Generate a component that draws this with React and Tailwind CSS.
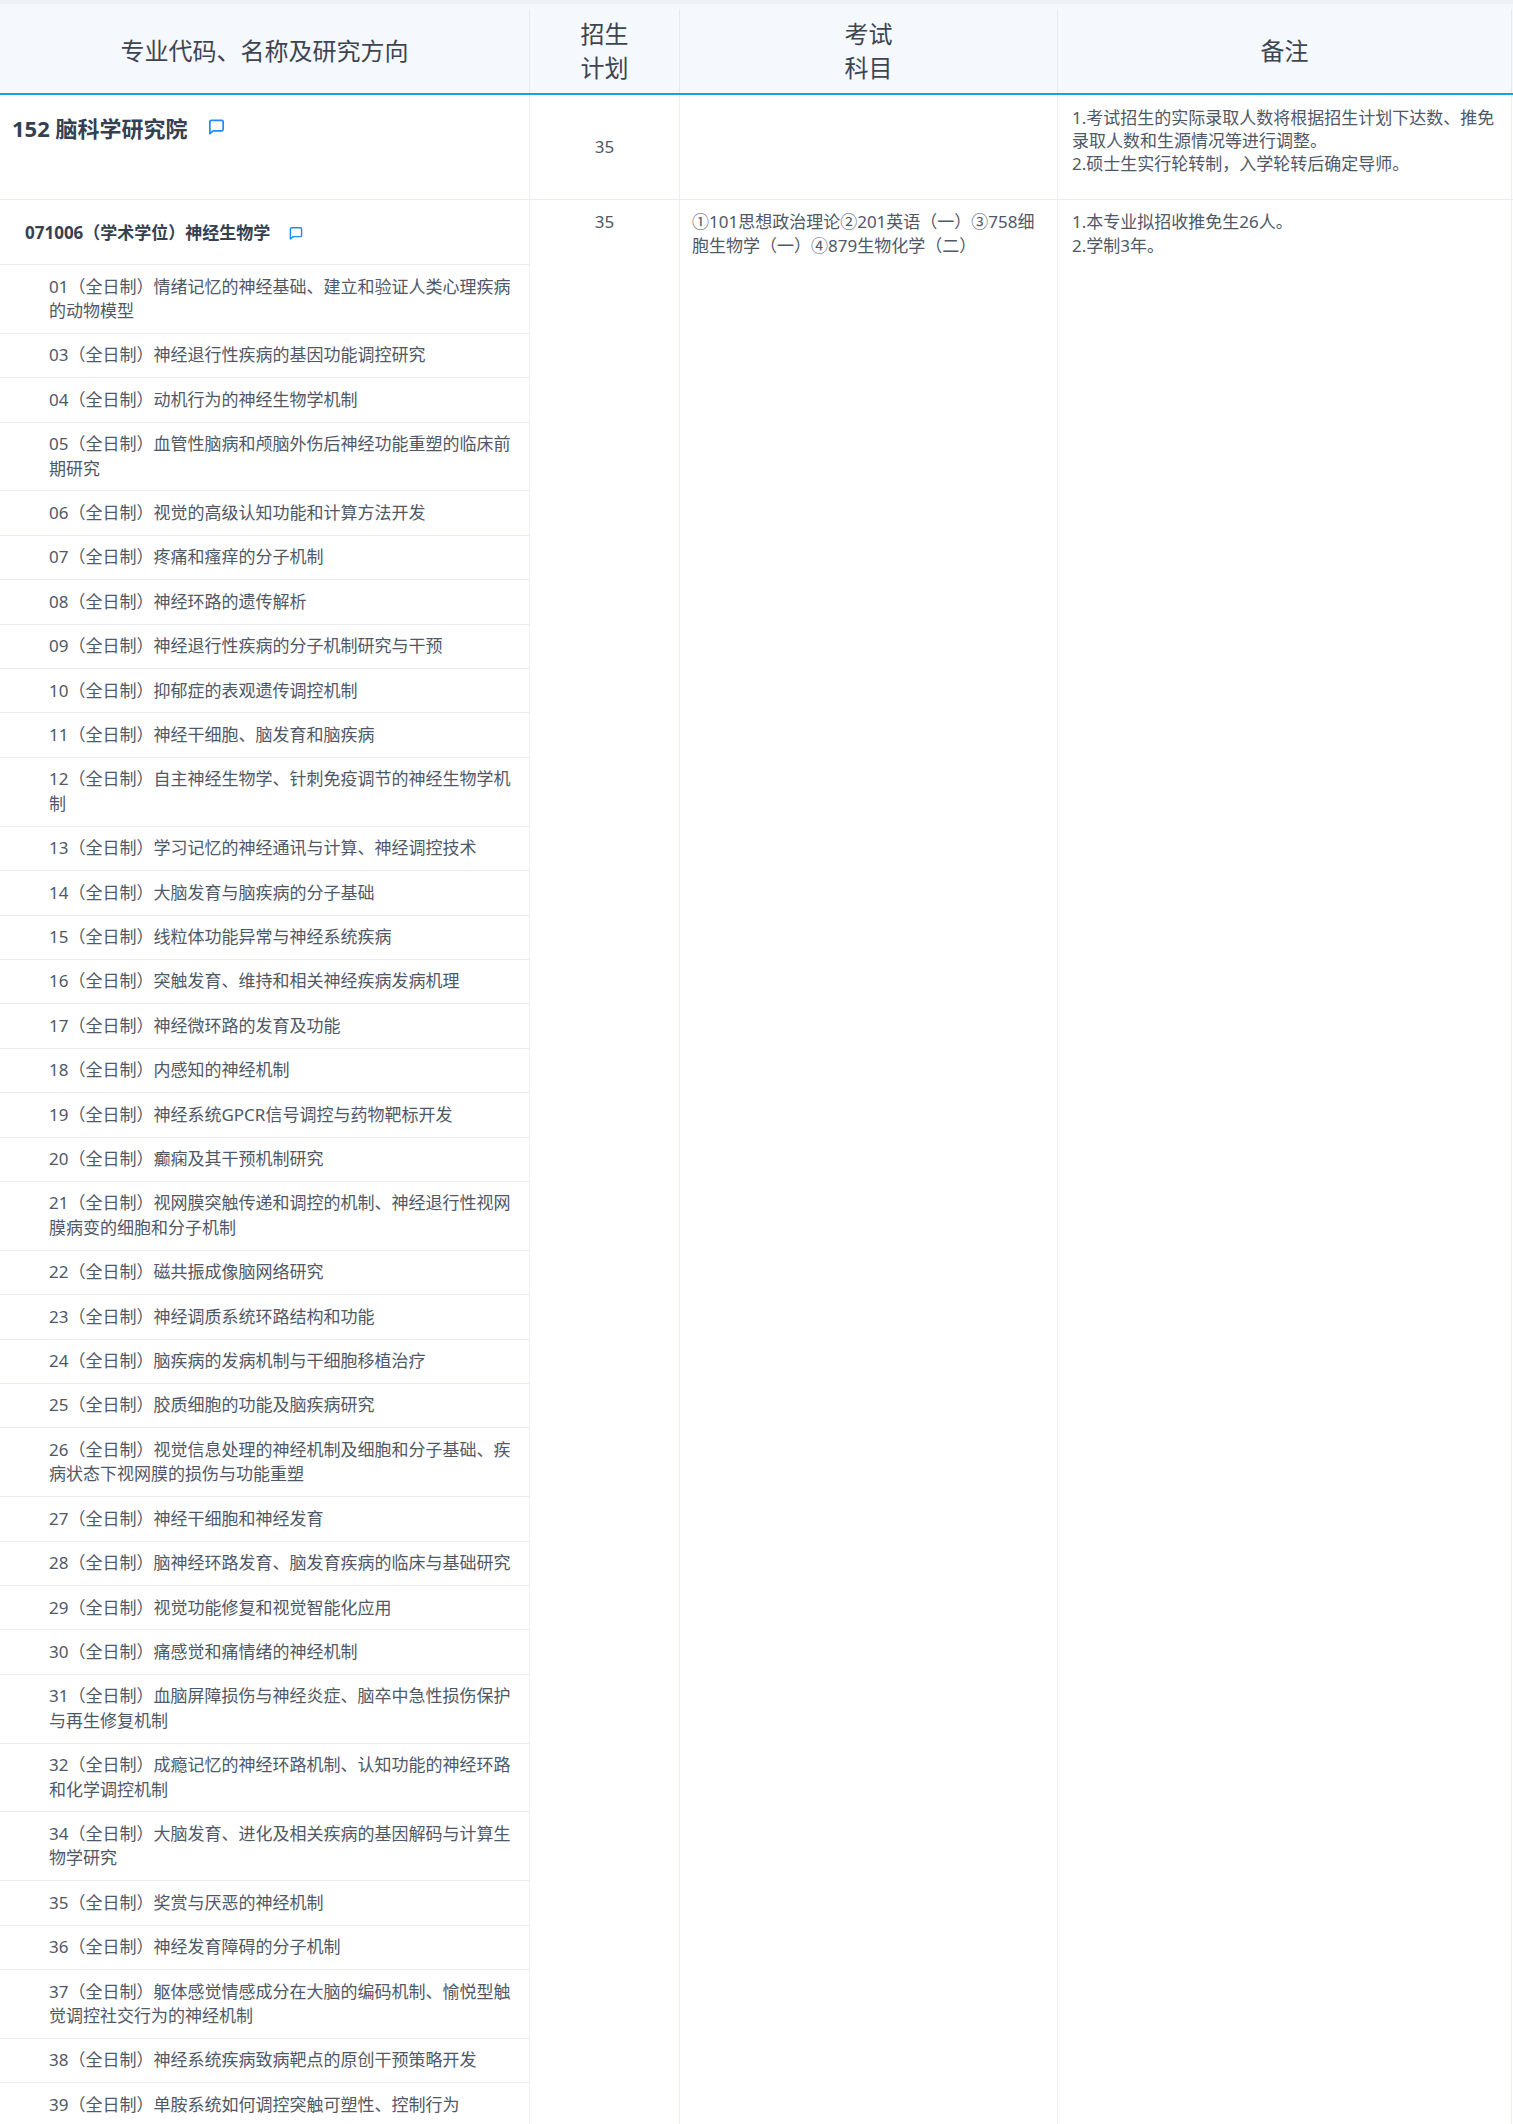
import React from 'react';

const directions = [
  '01（全日制）情绪记忆的神经基础、建立和验证人类心理疾病|的动物模型',
  '03（全日制）神经退行性疾病的基因功能调控研究',
  '04（全日制）动机行为的神经生物学机制',
  '05（全日制）血管性脑病和颅脑外伤后神经功能重塑的临床前|期研究',
  '06（全日制）视觉的高级认知功能和计算方法开发',
  '07（全日制）疼痛和瘙痒的分子机制',
  '08（全日制）神经环路的遗传解析',
  '09（全日制）神经退行性疾病的分子机制研究与干预',
  '10（全日制）抑郁症的表观遗传调控机制',
  '11（全日制）神经干细胞、脑发育和脑疾病',
  '12（全日制）自主神经生物学、针刺免疫调节的神经生物学机|制',
  '13（全日制）学习记忆的神经通讯与计算、神经调控技术',
  '14（全日制）大脑发育与脑疾病的分子基础',
  '15（全日制）线粒体功能异常与神经系统疾病',
  '16（全日制）突触发育、维持和相关神经疾病发病机理',
  '17（全日制）神经微环路的发育及功能',
  '18（全日制）内感知的神经机制',
  '19（全日制）神经系统GPCR信号调控与药物靶标开发',
  '20（全日制）癫痫及其干预机制研究',
  '21（全日制）视网膜突触传递和调控的机制、神经退行性视网|膜病变的细胞和分子机制',
  '22（全日制）磁共振成像脑网络研究',
  '23（全日制）神经调质系统环路结构和功能',
  '24（全日制）脑疾病的发病机制与干细胞移植治疗',
  '25（全日制）胶质细胞的功能及脑疾病研究',
  '26（全日制）视觉信息处理的神经机制及细胞和分子基础、疾|病状态下视网膜的损伤与功能重塑',
  '27（全日制）神经干细胞和神经发育',
  '28（全日制）脑神经环路发育、脑发育疾病的临床与基础研究',
  '29（全日制）视觉功能修复和视觉智能化应用',
  '30（全日制）痛感觉和痛情绪的神经机制',
  '31（全日制）血脑屏障损伤与神经炎症、脑卒中急性损伤保护|与再生修复机制',
  '32（全日制）成瘾记忆的神经环路机制、认知功能的神经环路|和化学调控机制',
  '34（全日制）大脑发育、进化及相关疾病的基因解码与计算生|物学研究',
  '35（全日制）奖赏与厌恶的神经机制',
  '36（全日制）神经发育障碍的分子机制',
  '37（全日制）躯体感觉情感成分在大脑的编码机制、愉悦型触|觉调控社交行为的神经机制',
  '38（全日制）神经系统疾病致病靶点的原创干预策略开发',
  '39（全日制）单胺系统如何调控突触可塑性、控制行为',
];

function Lines({ text }) {
  return text.split('|').map((line, i) => (
    <span key={i} className="block whitespace-nowrap">{line}</span>
  ));
}

function NoteIcon({ size }) {
  return (
    <svg width={size} height={size} viewBox="0 0 20 20" fill="none" stroke="#1f8cff" strokeWidth="1.8" strokeLinejoin="round">
      <path d="M4.5 3.5h11a1.5 1.5 0 0 1 1.5 1.5v8a1.5 1.5 0 0 1-1.5 1.5H6.5L3 17.5V5a1.5 1.5 0 0 1 1.5-1.5z" />
    </svg>
  );
}

export default function App() {
  return (
    <div
      className="w-[1513px] min-h-[2124px] bg-white text-[#4f5866]"
      style={{ fontFamily: '"Noto Sans", "Noto Sans CJK SC", sans-serif' }}
    >
      <div className="h-[4px] bg-[#eef1f5]" />

      {/* table head */}
      <div className="grid grid-cols-[530px_150px_378px_454px] h-[91px] pt-[5px] bg-[#f5f8fc] border-b-2 border-[#16a3e6] text-[24px] leading-[34px] text-[#3d4452]">
        <div className="flex items-center justify-center border-r border-[#e6eaef]">专业代码、名称及研究方向</div>
        <div className="flex flex-col items-center justify-center border-r border-[#e6eaef]">
          <span>招生</span>
          <span>计划</span>
        </div>
        <div className="flex flex-col items-center justify-center border-r border-[#e6eaef]">
          <span>考试</span>
          <span>科目</span>
        </div>
        <div className="flex items-center justify-center border-r border-[#e6eaef]">备注</div>
      </div>

      {/* department row */}
      <div className="grid grid-cols-[530px_150px_378px_454px] h-[105px] border-b border-[#e9ecf0] text-[17px]">
        <div className="flex items-start gap-[20px] pl-[12px] pt-[19px] border-r border-[#eceff3]">
          <span className="text-[22px] leading-[28px] font-bold text-[#354051]">152 脑科学研究院</span>
          <span className="pt-[3px]"><NoteIcon size={19} /></span>
        </div>
        <div className="flex items-center justify-center border-r border-[#eceff3]">35</div>
        <div className="border-r border-[#eceff3]" />
        <div className="pl-[14px] pr-[10px] pt-[11px] leading-[23px] border-r border-[#eceff3]">
          <p>1.考试招生的实际录取人数将根据招生计划下达数、推免录取人数和生源情况等进行调整。</p>
          <p>2.硕士生实行轮转制，入学轮转后确定导师。</p>
        </div>
      </div>

      {/* major row */}
      <div className="grid grid-cols-[530px_150px_378px_454px] text-[17px] leading-[24.4px]">
        <div className="flex flex-col border-r border-[#eceff3]">
          <div className="flex items-center gap-[18px] h-[65px] pl-[25px] pt-[2px] border-b border-[#e9ecf0]">
            <span className="font-bold text-[#354051]">071006（学术学位）神经生物学</span>
            <NoteIcon size={16} />
          </div>
          {directions.map((d) => (
            <div key={d.slice(0, 2)} className="pl-[49px] pr-[14px] py-[9.5px] border-b border-[#e9ecf0]">
              <Lines text={d} />
            </div>
          ))}
        </div>
        <div className="flex justify-center pt-[10px] border-r border-[#eceff3]">35</div>
        <div className="pl-[12px] pt-[10px] border-r border-[#eceff3]">
          <Lines text="①101思想政治理论②201英语（一）③758细|胞生物学（一）④879生物化学（二）" />
        </div>
        <div className="pl-[14px] pt-[10px] border-r border-[#eceff3]">
          <p>1.本专业拟招收推免生26人。</p>
          <p>2.学制3年。</p>
        </div>
      </div>
    </div>
  );
}
